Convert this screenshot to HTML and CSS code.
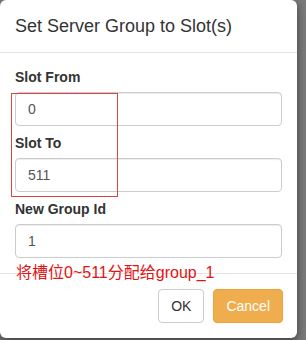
FILE: index.html
```
<!DOCTYPE html>
<html lang="zh">
<head>
    <meta charset="UTF-8">
    <meta name="viewport" content="width=device-width, initial-scale=1.0">
    <title>Set Server Group to Slot(s)</title>
    <link rel="stylesheet" href="styles.css">
</head>
<body>
    <div class="backdrop">
        <div class="modal">
            <div class="modal-header">
                <h4 class="modal-title">Set Server Group to Slot(s)</h4>
            </div>
            <div class="modal-body">
                <div class="form-group">
                    <label>Slot From</label>
                    <input type="text" class="form-control" value="0">
                </div>
                <div class="form-group">
                    <label>Slot To</label>
                    <input type="text" class="form-control" value="511">
                </div>
                <div class="form-group">
                    <label>New Group Id</label>
                    <input type="text" class="form-control" value="1">
                </div>
            </div>
            <div class="modal-footer">
                <button class="btn btn-default">OK</button>
                <button class="btn btn-warning">Cancel</button>
            </div>

            <!-- annotations drawn over the dialog -->
            <div class="mark-box"></div>
            <div class="mark-text">将槽位0~511分配给group_1</div>
        </div>
    </div>
</body>
</html>
```

FILE: styles.css
```
body {
    margin: 0;
    font-family: "Liberation Sans", Arial, "Noto Sans CJK SC", sans-serif;
    font-size: 14px;
    color: #333;
    background: #7a7a7a;
}
.backdrop {
    width: 306px;
    height: 340px;
    overflow: hidden;
}
.modal {
    position: relative;
    width: 297px;
    background: #fff;
    border-radius: 6px;
    box-shadow: 0 3px 9px rgba(0,0,0,0.5);
}
.modal-header {
    padding: 13px 15px;
    border-bottom: 1px solid #e5e5e5;
}
.modal-title {
    margin: 0;
    font-size: 18px;
    font-weight: normal;
    line-height: 26px;
}
.modal-body {
    padding: 14px 15px 15px;
}
.form-group {
    margin-bottom: 7px;
}
.form-group:last-child {
    margin-bottom: 0;
}
label {
    display: block;
    font-weight: bold;
    line-height: 20px;
    margin-bottom: 5px;
}
.form-control {
    display: block;
    width: 100%;
    height: 34px;
    padding: 6px 12px;
    font-family: inherit;
    font-size: 14px;
    color: #555;
    background: #fff;
    border: 1px solid #ccc;
    border-radius: 4px;
    box-shadow: inset 0 1px 1px rgba(0,0,0,0.075);
    box-sizing: border-box;
}
.modal-footer {
    display: flex;
    justify-content: flex-end;
    padding: 15px 14px 15px 15px;
    border-top: 1px solid #e5e5e5;
}
.btn {
    padding: 6px 12px;
    font-family: inherit;
    font-size: 14px;
    line-height: 20px;
    border: 1px solid transparent;
    border-radius: 4px;
    margin-left: 9px;
    cursor: pointer;
}
.btn-default {
    color: #333;
    background: #fff;
    border-color: #ccc;
}
.btn-warning {
    color: #fff;
    background: #f0ad4e;
    border-color: #eea236;
}
.mark-box {
    position: absolute;
    left: 11px;
    top: 93px;
    width: 105px;
    height: 102px;
    border: 1px solid #d94444;
}
.mark-text {
    position: absolute;
    left: 16px;
    top: 263px;
    font-size: 16px;
    line-height: 20px;
    color: #e01414;
}
```
